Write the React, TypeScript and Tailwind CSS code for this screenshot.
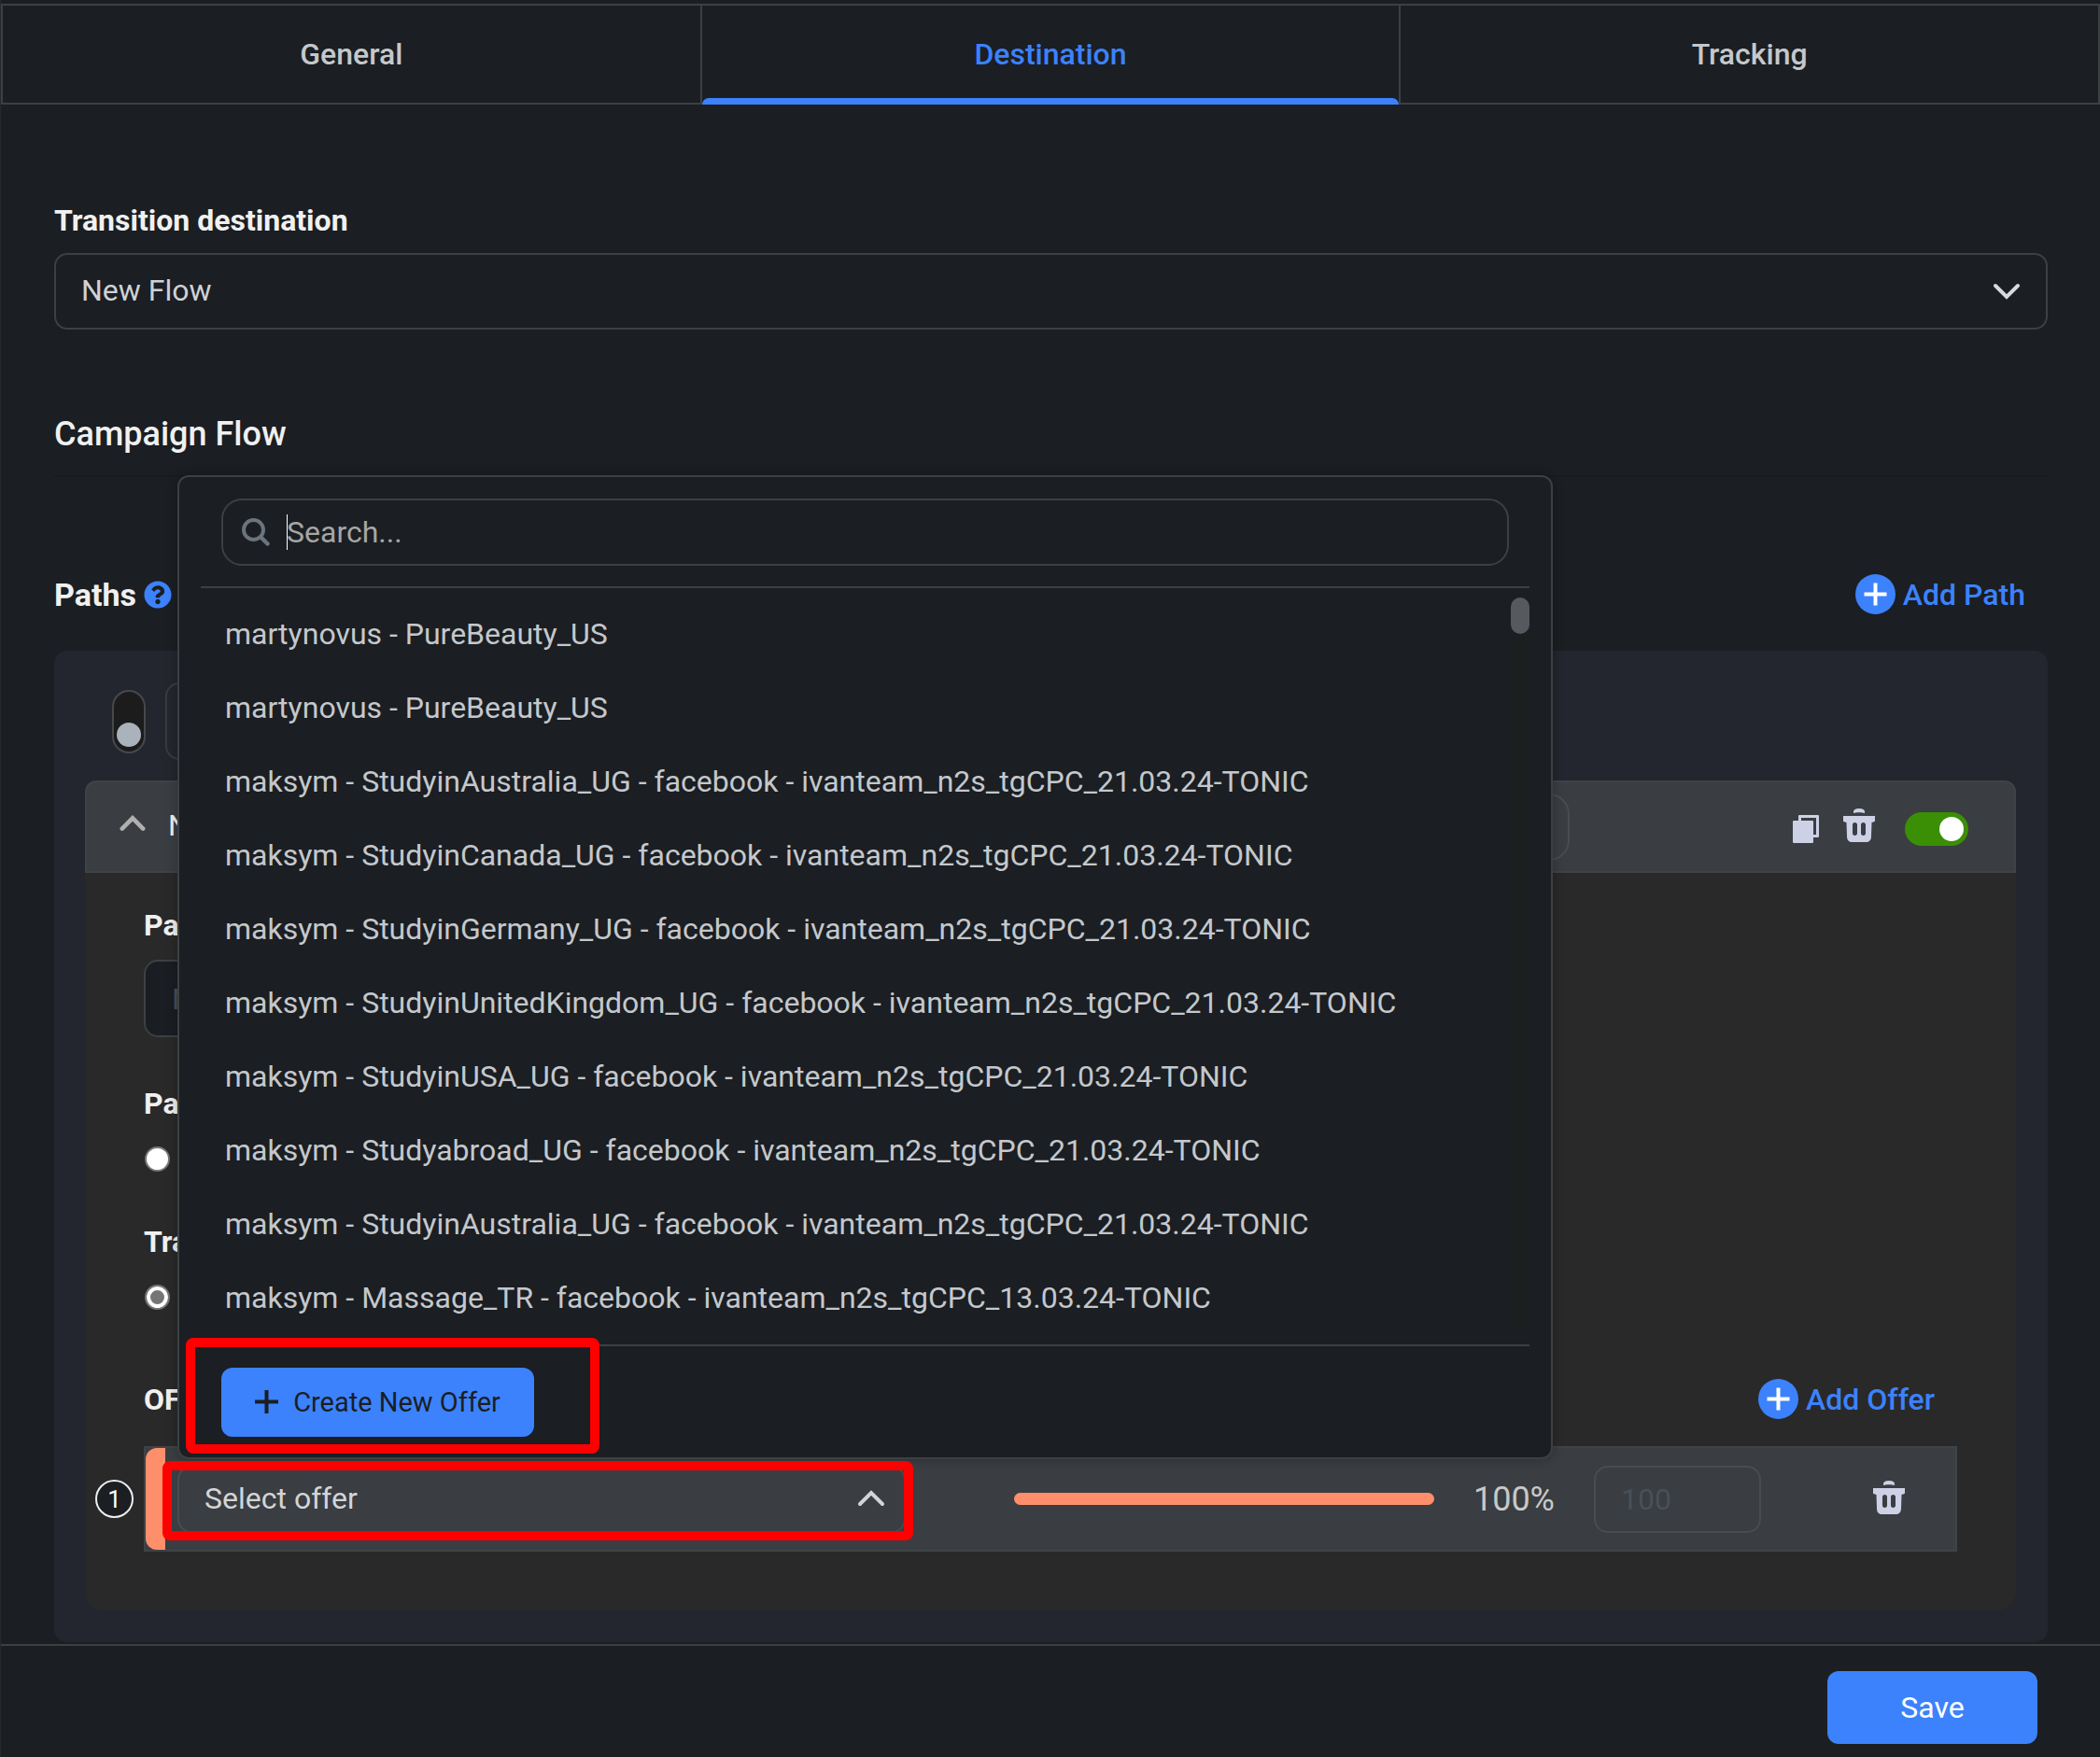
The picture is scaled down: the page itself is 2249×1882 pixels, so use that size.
import React, { useState } from "react";
import { FaQuestionCircle } from "react-icons/fa";

const offers = [
  "martynovus - PureBeauty_US",
  "martynovus - PureBeauty_US",
  "maksym - StudyinAustralia_UG - facebook - ivanteam_n2s_tgCPC_21.03.24-TONIC",
  "maksym - StudyinCanada_UG - facebook - ivanteam_n2s_tgCPC_21.03.24-TONIC",
  "maksym - StudyinGermany_UG - facebook - ivanteam_n2s_tgCPC_21.03.24-TONIC",
  "maksym - StudyinUnitedKingdom_UG - facebook - ivanteam_n2s_tgCPC_21.03.24-TONIC",
  "maksym - StudyinUSA_UG - facebook - ivanteam_n2s_tgCPC_21.03.24-TONIC",
  "maksym - Studyabroad_UG - facebook - ivanteam_n2s_tgCPC_21.03.24-TONIC",
  "maksym - StudyinAustralia_UG - facebook - ivanteam_n2s_tgCPC_21.03.24-TONIC",
  "maksym - Massage_TR - facebook - ivanteam_n2s_tgCPC_13.03.24-TONIC",
];

const tabs = ["General", "Destination", "Tracking"];

const Chevron: React.FC<{ up?: boolean; className?: string }> = ({ up, className }) => (
  <svg viewBox="0 0 30 18" fill="none" stroke="currentColor" strokeWidth="4" strokeLinecap="round" className={className}>
    <path d={up ? "M3 15 15 3 27 15" : "M3 3 15 15 27 3"} />
  </svg>
);

const SearchIcon: React.FC = () => (
  <svg viewBox="0 0 30 30" fill="none" stroke="#6b747c" strokeWidth="4" strokeLinecap="round" className="size-[30px]">
    <circle cx="12.500" cy="12.500" r="10.500" />
    <path d="M20.500 20.500 27.500 27.500" strokeWidth="4.500" />
  </svg>
);

const TrashIcon: React.FC = () => (
  <svg viewBox="0 0 34 36" fill="#cdd1e6" className="h-9 w-[34px]">
    <path d="M11 5V3.500C11 1.500 13 0 17 0s6 1.500 6 3.500V5c-2-1-10-1-12 0Z" />
    <path
      fillRule="evenodd"
      d="M0 8h34v5c0 1-1 1.500-3.500 2L30 30c-.2 4-2 6-6 6H10c-4 0-5.800-2-6-6L3.500 15C1 14.500 0 14 0 13Zm12.500 7C11 15 10 16 10 17.500v9c0 1.500 1 2.500 2.500 2.500S15 28 15 26.500v-9C15 16 14 15 12.500 15Zm9 0c-1.500 0-2.500 1-2.500 2.500v9c0 1.500 1 2.500 2.500 2.500S24 28 24 26.500v-9c0-1.500-1-2.500-2.500-2.500Z"
    />
  </svg>
);

const CopyIcon: React.FC = () => (
  <svg viewBox="0 0 28 30" fill="#cdd1e6" className="h-[30px] w-7">
    <path d="M1 6h20a1 1 0 0 1 1 1v22a1 1 0 0 1-1 1H1a1 1 0 0 1-1-1V7a1 1 0 0 1 1-1Z" />
    <path d="M6 6V1a1 1 0 0 1 1-1h20a1 1 0 0 1 1 1v22a1 1 0 0 1-1 1h-6v-3h4V3H9v3Z" />
  </svg>
);

const AddButton: React.FC<{ text: string }> = ({ text }) => (
  <button className="flex items-center gap-2 font-medium text-[#3c82fd]">
    <svg viewBox="0 0 43 43" className="size-[43px]">
      <circle cx="21.5" cy="21.5" r="21.5" fill="#3c82fd" />
      <path d="M21.500 9.500v24M9.500 21.500h24" stroke="#fff" strokeWidth="4" />
    </svg>
    {text}
  </button>
);

const OfferDropdown: React.FC = () => {
  const [search, setSearch] = useState("");

  return (
    <div className="absolute bottom-full left-0 z-10 mb-[7px] w-[1473px] rounded-xl border-2 border-[#3c4043] bg-[#1b1e22] px-[23px] py-[22px] shadow-[0_0_12px_rgba(0,0,0,0.25)]">
      {/* search */}
      <div className="mx-[22px] mt-px flex h-[72px] items-center gap-[18px] rounded-[22px] border-2 border-[#3c4043] px-5">
        <SearchIcon />
        <div className="flex flex-1 items-center">
          <span className="h-[38px] w-px bg-white" />
          <input
            aria-label="Search offers"
            placeholder="Search..."
            value={search}
            onChange={(e) => setSearch(e.target.value)}
            className="-ml-px min-w-0 flex-1 bg-transparent outline-none placeholder:text-[#a6a6a6]"
          />
        </div>
      </div>

      {/* list */}
      <div className="mt-[22px] flex border-y-2 border-[#3c4043] py-[10px]">
        <ul className="flex-1 pl-[26px] text-[#c4c8cc]">
          {offers.map((offer, i) => (
            <li key={i} className="flex h-[79px] items-center">
              {offer}
            </li>
          ))}
        </ul>
        <div className="w-5 rounded-full bg-[#1c1e1f]">
          <div className="h-[39px] rounded-full bg-[#565a5e]" />
        </div>
      </div>

      <div className="relative mx-[22px] mt-[23px] w-[335px]">
        <button className="flex h-[74px] w-full items-center justify-center gap-4 rounded-xl bg-[#3c82fd] text-[29px] text-[#1b1e22]">
          <svg viewBox="0 0 25 25" stroke="currentColor" strokeWidth="4" className="size-[25px]">
            <path d="M12.500 0v25M0 12.500h25" />
          </svg>
          Create New Offer
        </button>
        <div className="pointer-events-none absolute -top-8 -right-[70px] -bottom-[18px] -left-[38px] rounded-lg border-10 border-[#ff0000]" />
      </div>
    </div>
  );
};

const OfferRow: React.FC = () => (
  <div className="-ml-[52px] flex items-center gap-[11px]">
    <span className="flex size-[41px] items-center justify-center rounded-full border-2 border-[#eeeeee] bg-[#1b1e22] text-[26px] text-white">
      1
    </span>
    <div className="flex h-[113px] flex-1 items-center border-2 border-[#3f4346] bg-[#3a3d41] pr-[54px]">
      <div className="h-full w-[21px] rounded-l-xl bg-[#ff8f6b]" />
      <div className="relative ml-[13px] grow-78 basis-0">
        <button className="flex h-[72px] w-full items-center justify-between rounded-[15px] border-2 border-[#484d50] pr-5 pb-[2px] pl-[27px] text-[#d2d5d8]">
          Select offer
          <Chevron up className="h-[18px] w-[30px]" />
        </button>
        <div className="pointer-events-none absolute -top-[5px] -right-2 -bottom-2 -left-4 z-20 rounded-lg border-10 border-[#ff0000]" />
        <OfferDropdown />
      </div>
      <div className="ml-[116px] h-[13px] grow-45 basis-0 rounded-full bg-[#ff8f6b]" />
      <span className="ml-[42px] text-[36px] text-[#c8c8c8]">100%</span>
      <input
        aria-label="Offer weight"
        placeholder="100"
        className="ml-[42px] h-[72px] w-[179px] rounded-[15px] border-2 border-[#484d50] bg-transparent px-[27px] placeholder:text-[#485058]"
      />
      <button aria-label="Delete offer" className="mb-[3px] ml-[120px]">
        <TrashIcon />
      </button>
    </div>
  </div>
);

const App: React.FC = () => {
  const [active, setActive] = useState("Destination");

  return (
    <div className="flex min-h-screen flex-col border-l border-[#26292d] bg-[#1b1e22] pt-1 font-[Roboto,sans-serif] text-[32px] leading-[38px] text-[#f0f0f0]">
      {/* tabs */}
      <nav className="flex h-[108px] border-y-2 border-r-2 border-[#3c4043]">
        {tabs.map((tab) => (
          <button
            key={tab}
            onClick={() => setActive(tab)}
            className={`relative flex-1 border-l-2 border-[#3c4043] font-medium ${
              tab === active ? "text-[#3c82fd]" : "text-[#c4c8cc]"
            }`}
          >
            {tab}
            {tab === active && (
              <span className="absolute inset-x-0 -bottom-[2px] h-[7px] rounded-t-lg bg-[#3c82fd]" />
            )}
          </button>
        ))}
      </nav>

      <main className="flex-1 pt-[105px] pr-14 pl-[57px]">
        <label htmlFor="destination" className="block font-bold">
          Transition destination
        </label>
        <div className="relative mt-4">
          <select
            id="destination"
            className="h-[82px] w-full appearance-none rounded-[14px] border-2 border-[#3c4043] bg-[#1b1e22] px-[27px] pb-[2px] text-[#ced2d6]"
          >
            <option>New Flow</option>
          </select>
          <Chevron className="pointer-events-none absolute top-8 right-[29px] h-[18px] w-[30px] text-[#d8dadc]" />
        </div>

        <h2 className="mt-[90px] border-b-2 border-[#191b1f] pb-[22px] text-[36px] leading-[44px] font-medium">
          Campaign Flow
        </h2>

        <div className="mt-[104px] flex items-center justify-between pr-6">
          <h3 className="flex items-center gap-2 text-[34px] font-bold">
            Paths <FaQuestionCircle className="size-[30px] text-[#3c82fd]" />
          </h3>
          <AddButton text="Add Path" />
        </div>

        {/* paths panel */}
        <div className="mt-[39px] rounded-[14px] bg-[#23262e] pt-[34px] pr-[34px] pb-[34px] pl-[33px]">
          <div className="ml-[29px] flex items-center gap-[21px]">
            <button
              role="switch"
              aria-checked="false"
              aria-label="Rules"
              className="flex h-[68px] w-9 flex-col items-center justify-end rounded-full border-2 border-[#46484c] bg-[#1c1c1c] pb-[5px]"
            >
              <span className="size-[26px] rounded-full bg-[#aab2bb]" />
            </button>
            <input aria-label="Rule name" className="h-[83px] w-[780px] rounded-[15px] border-2 border-[#383b3f] px-7" />
          </div>

          <section className="mt-[22px]">
            <header className="flex h-[99px] items-center rounded-t-xl border-2 border-[#3f4346] bg-[#3a3d41] pr-[49px] pl-[35px]">
              <div className="flex flex-1 items-center gap-6 pb-1">
                <Chevron up className="mb-1 h-[18px] w-7 stroke-5 text-[#b0b0b0]" />
                <span>N</span>
              </div>
              <input aria-label="Path weight" className="mr-[239px] h-[72px] w-[179px] rounded-[22px] border-2 border-[#484d50]" />
              <div className="flex items-center pt-1">
                <button aria-label="Copy path">
                  <CopyIcon />
                </button>
                <button aria-label="Delete path" className="mb-2 ml-[26px]">
                  <TrashIcon />
                </button>
                <button
                  role="switch"
                  aria-checked="true"
                  aria-label="Path enabled"
                  className="ml-8 flex h-9 w-[68px] items-center justify-end rounded-full bg-[#3a8f05] pr-[5px]"
                >
                  <span className="size-[26px] rounded-full bg-white" />
                </button>
              </div>
            </header>

            <div className="rounded-b-[20px] bg-[#292929] px-[63px] pt-[37px] pb-[63px]">
              <label htmlFor="path-name" className="block font-bold">
                Pa
              </label>
              <input
                id="path-name"
                placeholder="N"
                className="mt-[18px] h-[83px] w-[780px] rounded-[15px] border-2 border-[#3c4043] bg-[#1a1d21] px-7 placeholder:text-[#465058]"
              />
              <fieldset className="mt-[52px]">
                <legend className="font-bold">Pa</legend>
                <input
                  type="radio"
                  name="mode"
                  aria-label="Path mode"
                  className="mt-[27px] ml-px block size-[27px] appearance-none rounded-full border-2 border-[#767676] bg-white"
                />
              </fieldset>
              <fieldset className="mt-14">
                <legend className="font-bold">Tra</legend>
                <input
                  type="radio"
                  name="transition"
                  aria-label="Transition"
                  defaultChecked
                  className="mt-[27px] ml-px block size-[27px] appearance-none rounded-full border-2 border-[#767676] bg-[#757575] shadow-[inset_0_0_0_4px_#fff]"
                />
              </fieldset>
              <div className="mt-[74px] mb-[29px] flex items-center justify-between pr-6">
                <h4 className="font-bold">OF</h4>
                <AddButton text="Add Offer" />
              </div>
              <OfferRow />
            </div>
          </section>
        </div>
      </main>

      <footer className="mt-[2px] flex justify-end border-t-2 border-[#3c4043] pt-[27px] pr-[67px] pb-[14px]">
        <button className="h-[78px] w-[225px] rounded-xl bg-[#3c82fd] text-white">Save</button>
      </footer>
    </div>
  );
};

export default App;
